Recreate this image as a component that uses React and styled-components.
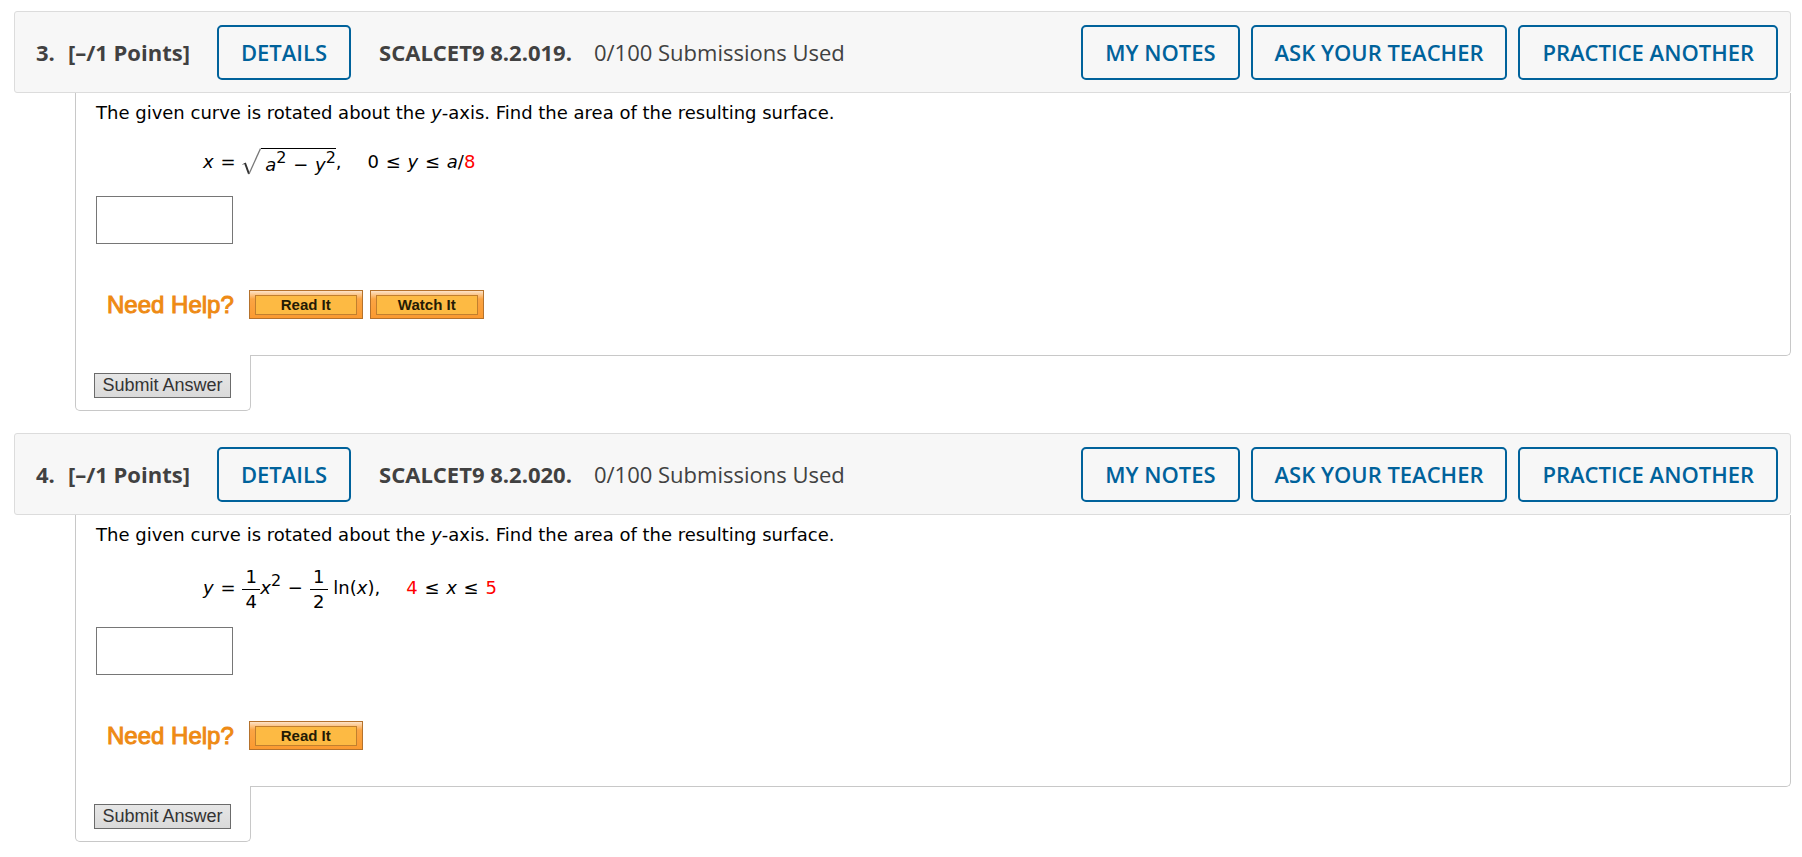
import React from "react";
import styled, { createGlobalStyle } from "styled-components";

const GlobalStyle = createGlobalStyle`
  *, *::before, *::after { box-sizing: border-box; }
  body { margin: 0; background: #fff; }
`;

const Page = styled.main`
  display: flex;
  flex-direction: column;
  gap: 22px;
  padding: 11px 11px 15px 14px;
  font-family: Verdana, "DejaVu Sans", sans-serif;
  font-size: 18px;
  line-height: 24px;
  color: #000;
`;

const Header = styled.header`
  display: flex;
  align-items: center;
  min-height: 82px;
  padding: 0 12px 0 21px;
  border: 1px solid #dcdcdc;
  border-radius: 3px;
  background: #f7f7f7;
  color: #414141;
  font-family: "Open Sans", sans-serif;
  font-size: 22px;
  line-height: 30px;
  white-space: nowrap;
`;

const Title = styled.h2`
  display: flex;
  gap: 13px;
  margin: 0 27px 0 0;
  font-size: inherit;
  font-weight: 700;
`;

const Source = styled.strong`
  margin: 0 22px 0 28px;
  font-weight: 700;
`;

const Actions = styled.div`
  display: flex;
  gap: 11px;
  margin-left: auto;
`;

const OutlineButton = styled.button`
  height: 55px;
  padding: 0 22px;
  border: 2px solid #00629b;
  border-radius: 5px;
  background: transparent;
  color: #00629b;
  font: 600 22px/30px "Open Sans", sans-serif;
  white-space: nowrap;
  cursor: pointer;
`;

const Body = styled.div`
  margin-left: 61px;
`;

const Panel = styled.div`
  display: flex;
  flex-direction: column;
  align-items: flex-start;
  padding: 8px 20px 36px;
  border: solid #c8c8c8;
  border-width: 0 1px 1px;
  border-radius: 0 0 5px 0;
`;

const Prompt = styled.p`
  margin: 0;
`;

const Formula = styled.div`
  display: flex;
  align-items: center;
  height: ${(p) => (p.$tall ? "53px" : "48px")};
  margin: ${(p) => (p.$tall ? "14px 0 13px 107px" : "13px 0 10px 107px")};
  white-space: pre;
`;

const Red = styled.span`
  color: #f00;
`;

const Op = styled.span`
  margin: 0 1px;
`;

const Range = styled.span`
  margin-left: 26px;
`;

const Sup = styled.sup`
  position: relative;
  top: -8px;
  font-size: 16px;
  line-height: 1;
  vertical-align: baseline;
`;

const Root = styled.span`
  display: flex;
  align-items: flex-start;
`;

const Radicand = styled.span`
  padding: 4px 0 0 4px;
  border-top: 1px solid #000;
`;

const Fraction = styled.span`
  display: flex;
  flex-direction: column;
  align-items: center;
  width: 18px;
  margin-top: 4px;
`;

const Denominator = styled.span`
  width: 100%;
  border-top: 1px solid #000;
  text-align: center;
`;

const Answer = styled.input`
  width: 137px;
  height: 48px;
  padding: 4px 8px;
  border: 1px solid #767676;
  background: #fff;
  font: inherit;
`;

const Help = styled.div`
  display: flex;
  align-items: center;
  gap: 7px;
  margin: 46px 0 0 11px;
`;

const HelpLabel = styled.span`
  margin-right: 8px;
  color: #ee8a14;
  font: 400 24px/28px "Liberation Sans", Arial, sans-serif;
  -webkit-text-stroke: 1px #ee8a14;
`;

const HelpButton = styled.button`
  width: 114px;
  height: 29px;
  padding: 4px 5px;
  border: 1px solid #b5722c;
  background: linear-gradient(#fde3c8, #fba544 8px, #fb9a30);
  font: 700 15px/18px "Liberation Sans", Arial, sans-serif;
  color: #241a05;
  cursor: pointer;

  span {
    display: block;
    height: 20px;
    border: 1px solid #c17f2e;
    background: #fdba43;
  }
`;

const SubmitTab = styled.div`
  width: 176px;
  margin-top: -1px;
  padding: 18px 18px 12px;
  border: solid #c8c8c8;
  border-width: 0 1px 1px;
  border-radius: 0 0 5px 5px;
  background: #fff;
`;

const SubmitButton = styled.button`
  display: block;
  width: 137px;
  height: 25px;
  padding: 0;
  border: 1px solid #6b6b6b;
  background: linear-gradient(#e6e6e6, #dadada);
  color: #333;
  font: 18px/21px "Liberation Sans", Arial, sans-serif;
  white-space: nowrap;
  cursor: pointer;
`;

function SquareRoot({ children }) {
  return (
    <Root>
      <svg width="19" height="28" viewBox="0 0 19 28" aria-hidden="true">
        <path d="M0.5 16.5 L3.5 15" stroke="#777" fill="none" />
        <path d="M3 15 L7 26" stroke="#333" strokeWidth="2" fill="none" />
        <path d="M7 26 L18.5 0.5" stroke="#777" strokeWidth="1.3" fill="none" />
      </svg>
      <Radicand>{children}</Radicand>
    </Root>
  );
}

function Frac({ top, bottom }) {
  return (
    <Fraction>
      <span>{top}</span>
      <Denominator>{bottom}</Denominator>
    </Fraction>
  );
}

function Question({ number, code, help, tall, children }) {
  return (
    <section>
      <Header>
        <Title>
          <span>{number}.</span>
          <span>[–/1 Points]</span>
        </Title>
        <OutlineButton type="button">DETAILS</OutlineButton>
        <Source>{code}</Source>
        <span>0/100 Submissions Used</span>
        <Actions>
          <OutlineButton type="button">MY NOTES</OutlineButton>
          <OutlineButton type="button">ASK YOUR TEACHER</OutlineButton>
          <OutlineButton type="button">PRACTICE ANOTHER</OutlineButton>
        </Actions>
      </Header>
      <Body>
        <Panel>
          <Prompt>
            The given curve is rotated about the <i>y</i>-axis. Find the area of the resulting surface.
          </Prompt>
          <Formula $tall={tall}>{children}</Formula>
          <Answer type="text" aria-label={`Answer to question ${number}`} />
          <Help>
            <HelpLabel>Need Help?</HelpLabel>
            {help.map((name) => (
              <HelpButton type="button" key={name}>
                <span>{name}</span>
              </HelpButton>
            ))}
          </Help>
        </Panel>
        <SubmitTab>
          <SubmitButton type="submit">Submit Answer</SubmitButton>
        </SubmitTab>
      </Body>
    </section>
  );
}

export default function App() {
  return (
    <>
      <GlobalStyle />
      <Page>
        <Question number={3} code="SCALCET9 8.2.019." help={["Read It", "Watch It"]}>
          <span><i>x</i> <Op>=</Op> </span>
          <SquareRoot>
            <i>a</i><Sup>2</Sup> <Op>−</Op> <i>y</i><Sup>2</Sup>
          </SquareRoot>
          <span>,</span>
          <Range>0 <Op>≤</Op> <i>y</i> <Op>≤</Op> <i>a</i>/<Red>8</Red></Range>
        </Question>
        <Question number={4} code="SCALCET9 8.2.020." help={["Read It"]} tall>
          <span><i>y</i> <Op>=</Op> </span>
          <Frac top="1" bottom="4" />
          <span><i>x</i><Sup>2</Sup> <Op>−</Op> </span>
          <Frac top="1" bottom="2" />
          <span> ln(<i>x</i>),</span>
          <Range><Red>4</Red> <Op>≤</Op> <i>x</i> <Op>≤</Op> <Red>5</Red></Range>
        </Question>
      </Page>
    </>
  );
}
